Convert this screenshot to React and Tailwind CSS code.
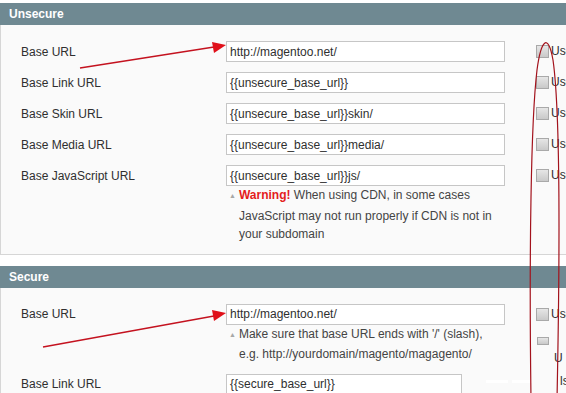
import React from 'react';

const font = { fontFamily: '"Liberation Sans", Arial, sans-serif' };

const Checkbox = ({ small }) => (
  <div
    className={`shrink-0 border border-[#a9a9a9] bg-gradient-to-b from-[#e6e6e6] to-[#c9c9c9] ${
      small ? 'w-[12px] h-[8px]' : 'w-[13px] h-[13px]'
    }`}
  />
);

const Row = ({ label, value, width = 'w-[279px]', children, check = true }) => (
  <div className="flex items-start">
    <div className="w-[205px] shrink-0 h-[21px] flex items-center text-[12px] leading-[14px] text-[#2f2f2f]">
      {label}
    </div>
    <div className="flex flex-col shrink-0">
      <div
        className={`${width} h-[21px] bg-white border border-[#c6c6c6] px-[3px] flex items-center text-[12px] leading-[14px] text-[#2f2f2f]`}
      >
        {value}
      </div>
      {children}
    </div>
    {check && (
      <div className="ml-[31px] mt-[4px] shrink-0 flex items-center gap-[2px] whitespace-nowrap text-[12px] leading-[13px] text-[#2f2f2f]">
        <Checkbox />
        <span>Use default</span>
      </div>
    )}
  </div>
);

const Header = ({ title }) => (
  <div className="h-[22px] bg-[#6f8992] pl-[9px] flex items-center text-[12px] font-bold text-white">
    {title}
  </div>
);

const Triangle = () => <span className="text-[7px] text-[#a7a7a7] mr-[3px] relative top-[-1px]">▲</span>;

export default function App() {
  return (
    <div className="relative w-[566px] h-[393px] overflow-hidden bg-white" style={font}>
      <div className="pt-[3px]">
        <Header title="Unsecure" />
        <div className="bg-[#fafafa] border-l border-b border-[#d6d6d6] pl-[20px] pt-[16px] pb-[10px] flex flex-col gap-[10px]">
          <Row label="Base URL" value="http://magentoo.net/" />
          <Row label="Base Link URL" value="{{unsecure_base_url}}" />
          <Row label="Base Skin URL" value="{{unsecure_base_url}}skin/" />
          <Row label="Base Media URL" value="{{unsecure_base_url}}media/" />
          <Row label="Base JavaScript URL" value="{{unsecure_base_url}}js/">
            <div className="pl-[3px] text-[12px] leading-[18.5px] text-[#444]">
              <div>
                <Triangle />
                <span className="font-bold text-[#e41c1c]">Warning!</span> When using CDN, in some cases
              </div>
              <div className="pl-[10px]">JavaScript may not run properly if CDN is not in</div>
              <div className="pl-[10px]">your subdomain</div>
            </div>
          </Row>
        </div>
      </div>

      <div className="pt-[11px]">
        <Header title="Secure" />
        <div className="bg-[#fafafa] border-l border-[#d6d6d6] pl-[20px] pt-[16px] flex flex-col gap-[10px]">
          <div className="relative">
            <Row label="Base URL" value="http://magentoo.net/">
              <div className="pl-[3px] w-[262px] whitespace-nowrap overflow-hidden text-[12px] leading-[19px] text-[#444]">
                <div>
                  <Triangle />
                  Make sure that base URL ends with '/' (slash),
                </div>
                <div className="pl-[10px]">e.g. http://yourdomain/magento/magagento/</div>
              </div>
            </Row>
            <div className="absolute left-[516px] top-[33px]">
              <Checkbox small />
            </div>
            <div className="absolute left-[533px] top-[45px] text-[12px] text-[#2f2f2f]">U</div>
          </div>
          <Row label="Base Link URL" value="{{secure_base_url}}" width="w-[236px]" check={false} />
        </div>
      </div>

      {/* white smudges near the bottom right */}
      <div className="absolute left-[486px] top-[380px] w-[22px] h-[3px] bg-white" />
      <div className="absolute left-[512px] top-[380px] w-[20px] h-[3px] bg-white" />
      <div className="absolute left-[560px] top-[372px] text-[12px] text-[#2f2f2f]">ls</div>

      {/* red annotations */}
      <svg className="absolute inset-0 pointer-events-none" width="566" height="393" viewBox="0 0 566 393">
        <line x1="80" y1="68" x2="214" y2="47" stroke="#c4121f" strokeWidth="1.3" />
        <polygon points="226,45 212,42 214,53" fill="#e0101a" />
        <line x1="43" y1="347" x2="214" y2="316" stroke="#c4121f" strokeWidth="1.3" />
        <polygon points="226,313 212,310 214,321" fill="#e0101a" />
        <path
          d="M 531 400 C 529 250, 531 120, 537 70 C 541 40, 548 32, 553 60 C 558 95, 561 200, 557 400"
          fill="none"
          stroke="#a3121c"
          strokeWidth="1.2"
        />
      </svg>
    </div>
  );
}
